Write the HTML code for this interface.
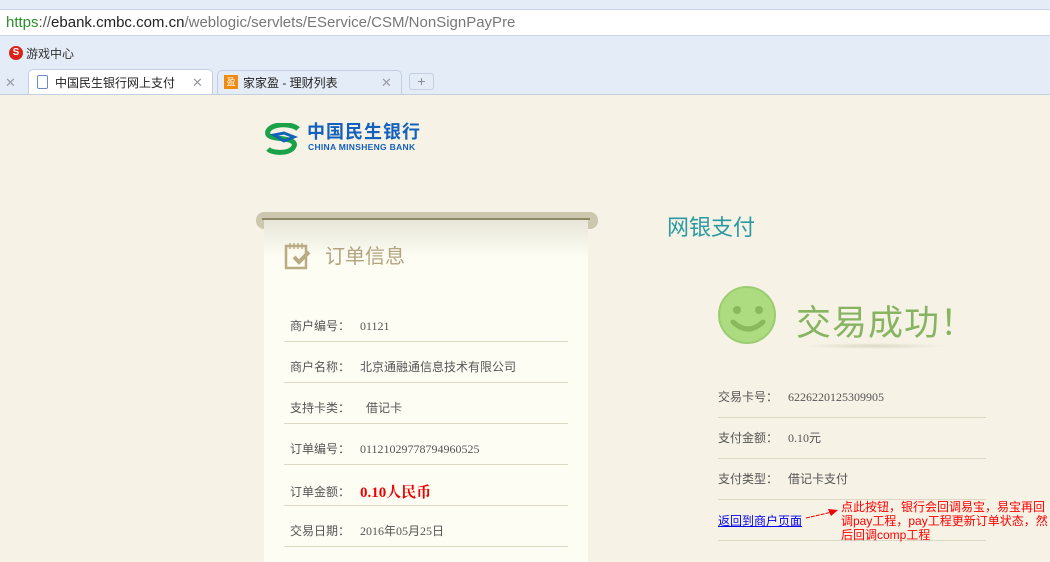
<!DOCTYPE html>
<html><head><meta charset="utf-8"><style>
*{margin:0;padding:0;box-sizing:border-box}
body{width:1050px;height:562px;overflow:hidden;position:relative;background:#f6f2e5;font-family:"Liberation Sans","Noto Sans CJK SC",sans-serif;}
.a{position:absolute}
.chrome{left:0;top:0;width:1050px;height:95px;background:#e4ecf7}
.url{left:0;top:9px;width:1050px;height:27px;background:#fff;border-top:1px solid #c9d5e4;border-bottom:1px solid #c9d5e4;font-size:15px;line-height:25px;padding-left:6px;color:#777}
.lbl{font-family:"Liberation Serif","Noto Sans CJK SC",serif;font-size:12px;color:#555;line-height:16px}
.line{height:1px;background:#dcd8c4}
</style></head><body>
<div class="a chrome"></div>
<div class="a url"><span style="color:#2a8f2a">https</span><span style="color:#555">://</span><span style="color:#222">ebank.cmbc.com.cn</span>/weblogic/servlets/EService/CSM/NonSignPayPre</div>
<div class="a" style="left:9px;top:46px;width:14px;height:14px;border-radius:50%;background:#d9241b;color:#fff;font-size:10px;line-height:14px;text-align:center;font-weight:bold">S</div>
<div class="a" style="left:26px;top:45px;font-size:12px;color:#333">游戏中心</div>
<div class="a" style="left:5px;top:75px;font-size:13px;color:#99a">✕</div>
<div class="a" style="left:28px;top:69px;width:185px;height:26px;background:#fff;border:1px solid #c3cfdf;border-bottom:none;border-radius:5px 5px 0 0"></div>
<div class="a" style="left:37px;top:75px;width:11px;height:14px;border:1px solid #6b8bc4;border-radius:2px"></div>
<div class="a" style="left:55px;top:74px;font-size:12px;color:#222">中国民生银行网上支付</div>
<div class="a" style="left:192px;top:75px;font-size:13px;color:#99a">✕</div>
<div class="a" style="left:217px;top:70px;width:185px;height:24px;border:1px solid #c3cfdf;border-bottom:none;border-radius:5px 5px 0 0"></div>
<div class="a" style="left:224px;top:75px;width:14px;height:14px;background:#f08a10;color:#fff;font-size:9px;text-align:center;line-height:14px">盈</div>
<div class="a" style="left:243px;top:74px;font-size:12px;color:#222">家家盈 - 理财列表</div>
<div class="a" style="left:381px;top:75px;font-size:13px;color:#99a">✕</div>
<div class="a" style="left:409px;top:73px;width:25px;height:17px;border:1px solid #c3cfdf;border-radius:3px;text-align:center;font-size:14px;line-height:15px;color:#889">+</div>
<div class="a" style="left:0;top:94px;width:1050px;height:1px;background:#c3cfdf"></div>

<!-- logo -->
<svg class="a" style="left:264px;top:123px" width="40" height="32" viewBox="0 0 40 32"><path d="M34 6 C28 0 8 0 4 8 C1 15 14 15 20 16 C28 17 34 20 28 26 C22 31 8 30 4 26" fill="none" stroke="#1aa24a" stroke-width="5"/><path d="M10 12 L20 10 L30 14 L20 18 Z" fill="none" stroke="#1062b8" stroke-width="3"/></svg>
<div class="a" style="left:307px;top:122px;font-size:18px;line-height:20px;font-weight:bold;color:#1361bd;letter-spacing:1px">中国民生银行</div>
<div class="a" style="left:308px;top:143px;font-size:8.5px;line-height:9px;font-weight:bold;color:#1361bd;letter-spacing:0.3px">CHINA MINSHENG BANK</div>

<!-- card -->
<div class="a" style="left:256px;top:212px;width:342px;height:17px;border-radius:8px;background:#ccc8af"></div>
<div class="a" style="left:264px;top:218px;width:324px;height:344px;background:linear-gradient(#e6e4d6,#fdfdf4 40px,#fdfdf4)"></div>
<div class="a" style="left:262px;top:218px;width:328px;height:2px;background:#8d8866"></div>
<svg class="a" style="left:284px;top:241px" width="28" height="30"><rect x="2" y="5" width="20" height="22" fill="none" stroke="#b9ab82" stroke-width="2.5"/><path d="M6 2v6M10 2v6M14 2v6M18 2v6" stroke="#b9ab82" stroke-width="1.5"/><path d="M10 16l5 5 10-10" fill="none" stroke="#b9ab82" stroke-width="4"/></svg>
<div class="a" style="left:325px;top:243px;font-size:20px;line-height:28px;color:#b3a47f">订单信息</div>

<div class="a lbl" style="left:290px;top:318px">商户编号：</div><div class="a lbl" style="left:360px;top:318px">01121</div>
<div class="a line" style="left:284px;top:341px;width:284px"></div>
<div class="a lbl" style="left:290px;top:359px">商户名称：</div><div class="a lbl" style="left:360px;top:359px">北京通融通信息技术有限公司</div>
<div class="a line" style="left:284px;top:382px;width:284px"></div>
<div class="a lbl" style="left:290px;top:400px">支持卡类：</div><div class="a lbl" style="left:366px;top:400px">借记卡</div>
<div class="a line" style="left:284px;top:423px;width:284px"></div>
<div class="a lbl" style="left:290px;top:441px">订单编号：</div><div class="a lbl" style="left:360px;top:441px">01121029778794960525</div>
<div class="a line" style="left:284px;top:464px;width:284px"></div>
<div class="a lbl" style="left:290px;top:484px">订单金额：</div><div class="a" style="left:360px;top:481px;font-family:'Liberation Serif','Noto Serif CJK SC',serif;font-size:15px;font-weight:bold;color:#e00">0.10人民币</div>
<div class="a line" style="left:284px;top:505px;width:284px"></div>
<div class="a lbl" style="left:290px;top:523px">交易日期：</div><div class="a lbl" style="left:360px;top:523px">2016年05月25日</div>
<div class="a line" style="left:284px;top:546px;width:284px"></div>

<!-- right -->
<div class="a" style="left:667px;top:210px;font-size:22px;color:#2b9aa3">网银支付</div>
<div class="a" style="left:718px;top:286px;width:58px;height:58px;border-radius:50%;background:#addb7f;border:2px solid #9ccc72"></div>
<svg class="a" style="left:718px;top:286px" width="60" height="60"><circle cx="19" cy="24" r="4" fill="#89b95c"/><circle cx="41" cy="24" r="4" fill="#89b95c"/><path d="M15 36 Q30 50 45 36" fill="none" stroke="#89b95c" stroke-width="5" stroke-linecap="round"/></svg>
<div class="a" style="left:796px;top:295px;font-size:35px;color:#86b461;letter-spacing:1px">交易成功！</div>
<div class="a" style="left:800px;top:343px;width:148px;height:6px;border-radius:50%;background:radial-gradient(#dcd8c8,rgba(246,242,229,0) 70%)"></div>

<div class="a lbl" style="left:718px;top:389px">交易卡号：</div><div class="a lbl" style="left:788px;top:389px">6226220125309905</div>
<div class="a line" style="left:718px;top:417px;width:268px"></div>
<div class="a lbl" style="left:718px;top:430px">支付金额：</div><div class="a lbl" style="left:788px;top:430px">0.10元</div>
<div class="a line" style="left:718px;top:458px;width:268px"></div>
<div class="a lbl" style="left:718px;top:471px">支付类型：</div><div class="a lbl" style="left:788px;top:471px">借记卡支付</div>
<div class="a line" style="left:718px;top:499px;width:268px"></div>
<div class="a" style="left:718px;top:512px;font-size:12px;color:#00e;text-decoration:underline">返回到商户页面</div>
<div class="a line" style="left:718px;top:540px;width:268px"></div>
<svg class="a" style="left:804px;top:505px" width="36" height="16"><path d="M2 13 L28 7" stroke="#e00" stroke-width="1" stroke-dasharray="4,1"/><path d="M34 5 L24 4 L27 11 Z" fill="#e00"/></svg>
<div class="a" style="left:841px;top:500px;width:209px;font-size:12px;line-height:14px;color:#f00">点此按钮，银行会回调易宝，易宝再回调pay工程，pay工程更新订单状态，然后回调comp工程</div>
</body></html>
